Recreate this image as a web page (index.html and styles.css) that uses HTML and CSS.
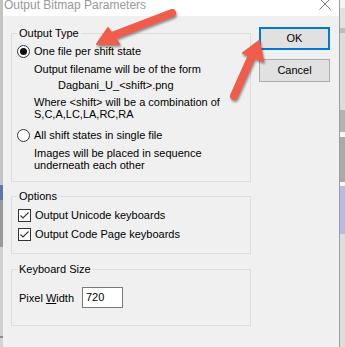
FILE: index.html
```html
<!DOCTYPE html>
<html lang="en">
<head>
    <meta charset="UTF-8">
    <title>Output Bitmap Parameters</title>
    <link rel="stylesheet" href="styles.css">
</head>
<body>
    <div class="screen">
        <div class="edge-left"></div>

        <div class="dialog">
            <div class="titlebar">
                <span class="title">Output Bitmap Parameters</span>
                <svg class="close" width="12" height="12" viewBox="0 0 12 12">
                    <path d="M0.5 -1.5 L11.5 9.5 M11.5 -1.5 L0.5 9.5" stroke="#7a7a7a" stroke-width="1" fill="none"/>
                </svg>
            </div>

            <div class="body">
                <div class="groups">
                    <fieldset class="group group-type">
                        <legend>Output Type</legend>
                        <div class="option"><span class="radio checked"></span>One file per shift state</div>
                        <div class="note note-first">Output filename will be of the form</div>
                        <div class="note note-file">Dagbani_U_&lt;shift&gt;.png</div>
                        <div class="note note-gap">Where &lt;shift&gt; will be a combination of</div>
                        <div class="note">S,C,A,LC,LA,RC,RA</div>
                        <div class="option option-second"><span class="radio"></span>All shift states in single file</div>
                        <div class="note note-gap">Images will be placed in sequence</div>
                        <div class="note">underneath each other</div>
                    </fieldset>

                    <fieldset class="group group-options">
                        <legend>Options</legend>
                        <div class="option check-row">
                            <span class="checkbox"><svg width="11" height="11" viewBox="0 0 11 11"><path d="M1.5 5.5 L4 8 L9.5 2.5" stroke="#333" stroke-width="1.1" fill="none"/></svg></span>
                            Output Unicode keyboards
                        </div>
                        <div class="option check-row check-second">
                            <span class="checkbox"><svg width="11" height="11" viewBox="0 0 11 11"><path d="M1.5 5.5 L4 8 L9.5 2.5" stroke="#333" stroke-width="1.1" fill="none"/></svg></span>
                            Output Code Page keyboards
                        </div>
                    </fieldset>

                    <fieldset class="group group-size">
                        <legend>Keyboard Size</legend>
                        <div class="size-row">
                            <span class="size-label">Pixel <u>W</u>idth</span>
                            <span class="size-input">720</span>
                        </div>
                    </fieldset>
                </div>

                <div class="buttons">
                    <div class="btn btn-default">OK</div>
                    <div class="btn">Cancel</div>
                </div>
            </div>
        </div>

        <div class="edge-right"></div>

        <!-- annotation arrows drawn over the dialog -->
        <svg class="arrows" width="345" height="347" viewBox="0 0 345 347">
            <g fill="#f25c4b" stroke="#f25c4b" stroke-linejoin="round">
                <line x1="172" y1="13" x2="112" y2="36" stroke-width="8" stroke-linecap="round"/>
                <polygon points="97,44 108,28 119,44" stroke-width="2"/>
                <line x1="234" y1="96" x2="251" y2="58" stroke-width="8" stroke-linecap="round"/>
                <polygon points="259,41 243,53 263,61" stroke-width="2"/>
            </g>
        </svg>
    </div>
</body>
</html>
```

FILE: styles.css
```css
body {
    margin: 0;
    padding: 0;
    background-color: #f0f0f0;
    font-family: "Liberation Sans", Arial, sans-serif;
    font-size: 11px;
    color: #000;
}

.screen {
    position: relative;
    display: flex;
    width: 345px;
    height: 347px;
    overflow: hidden;
}

.edge-left {
    width: 3px;
    background: linear-gradient(to bottom, #c4c4c4 0 185px, #5b78a6 185px 200px, #9a9a9a 200px 247px, #cfcfcf 247px 336px, #8a8a8a 336px 338px, #d4d4d4 338px);
}

.edge-right {
    width: 5px;
    background: linear-gradient(to bottom, #f4f4f4 0 8px, #e2e2e2 8px 28px, #bdbdbd 28px 33px, #dcdcdc 33px 110px, #b3b3b3 110px 132px, #f6f6f6 132px 137px, #aaaaaa 137px 182px, #f6f6f6 182px 186px, #b8bce4 186px 234px, #dedede 234px);
}

.dialog {
    width: 336px;
    border-right: 1px solid #9c9c9c;
    background-color: #f0f0f0;
}

.titlebar {
    display: flex;
    height: 16px;
    background-color: #fff;
    overflow: hidden;
}

.title {
    margin-top: -3px;
    padding-left: 1px;
    font-size: 12px;
    line-height: 16px;
    color: #9a9a9a;
}

.close {
    margin-left: auto;
    margin-right: 8px;
}

.body {
    display: flex;
    padding: 11px 9px 0 8px;
    gap: 8px;
}

.groups {
    width: 240px;
}

.group {
    margin: 0;
    padding: 5px 5px 10px;
    border: 1px solid #dcdcdc;
}

.group legend {
    padding: 0 2px;
    line-height: 13px;
}

.group-options {
    margin-top: 8px;
    padding-top: 6px;
    padding-bottom: 12px;
}

.group-size {
    margin-top: 9px;
    padding-top: 11px;
    padding-bottom: 17px;
}

.option {
    display: flex;
    align-items: center;
    gap: 4px;
    height: 13px;
    line-height: 13px;
    white-space: nowrap;
}

.option-second {
    margin-top: 9px;
}

.radio {
    display: flex;
    align-items: center;
    justify-content: center;
    box-sizing: border-box;
    width: 13px;
    height: 13px;
    border: 1px solid #333;
    border-radius: 50%;
    background-color: #fff;
}

.radio.checked::after {
    content: "";
    width: 7px;
    height: 7px;
    border-radius: 50%;
    background-color: #111;
}

.note {
    margin-left: 17px;
    line-height: 12px;
    white-space: nowrap;
}

.note-first {
    margin-top: 5px;
}

.note-file {
    margin-top: 4px;
    margin-left: 41px;
}

.note-gap {
    margin-top: 5px;
}

.check-row {
    margin-left: 1px;
}

.check-second {
    margin-top: 6px;
}

.checkbox {
    display: flex;
    align-items: center;
    justify-content: center;
    box-sizing: border-box;
    width: 13px;
    height: 13px;
    border: 1px solid #333;
    background-color: #fff;
}

.size-row {
    display: flex;
    align-items: center;
    height: 21px;
    margin-left: 2px;
}

.size-label {
    width: 63px;
}

.size-input {
    box-sizing: border-box;
    width: 41px;
    height: 21px;
    padding-left: 3px;
    line-height: 19px;
    border: 1px solid #7a7a7a;
    background-color: #fff;
}

.buttons {
    width: 71px;
}

.btn {
    box-sizing: border-box;
    height: 23px;
    margin-bottom: 9px;
    line-height: 21px;
    text-align: center;
    border: 1px solid #adadad;
    background-color: #e1e1e1;
}

.btn-default {
    line-height: 19px;
    border: 2px solid #0078d7;
}

.arrows {
    position: absolute;
    left: 0;
    top: 0;
    pointer-events: none;
    filter: drop-shadow(1px 2px 1px rgba(0, 0, 0, 0.4));
}
```
